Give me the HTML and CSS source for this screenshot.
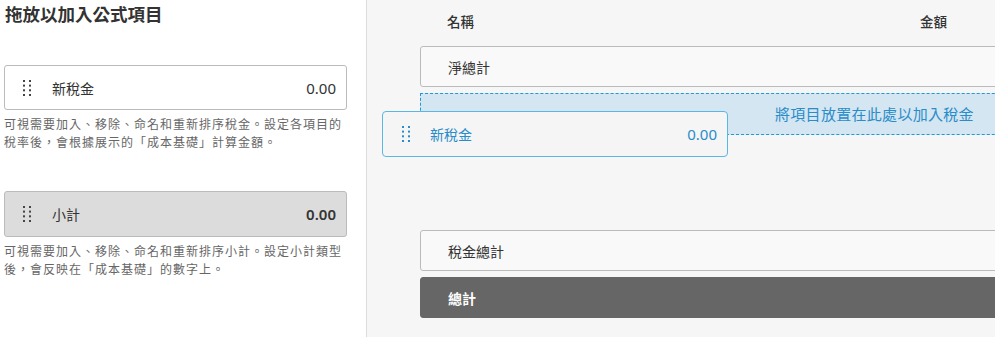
FILE: index.html
```html
<!DOCTYPE html>
<html lang="zh-Hant">
<head>
    <meta charset="UTF-8">
    <meta name="viewport" content="width=device-width, initial-scale=1.0">
    <title>公式項目</title>
    <link rel="stylesheet" href="styles.css">
</head>
<body>
    <div class="layout">
        <aside class="palette">
            <h2>拖放以加入公式項目</h2>

            <div class="item">
                <svg class="handle" width="8" height="16" viewBox="0 0 8 16"><g fill="currentColor"><rect x="0" y="0" width="2" height="2"/><rect x="6" y="0" width="2" height="2"/><rect x="0" y="4.6" width="2" height="2"/><rect x="6" y="4.6" width="2" height="2"/><rect x="0" y="9.3" width="2" height="2"/><rect x="6" y="9.3" width="2" height="2"/><rect x="0" y="14" width="2" height="2"/><rect x="6" y="14" width="2" height="2"/></g></svg>
                <span class="name">新稅金</span>
                <span class="amount">0.00</span>
            </div>
            <p class="hint">可視需要加入、移除、命名和重新排序稅金。設定各項目的稅率後，會根據展示的「成本基礎」計算金額。</p>

            <div class="item subtotal">
                <svg class="handle" width="8" height="16" viewBox="0 0 8 16"><g fill="currentColor"><rect x="0" y="0" width="2" height="2"/><rect x="6" y="0" width="2" height="2"/><rect x="0" y="4.6" width="2" height="2"/><rect x="6" y="4.6" width="2" height="2"/><rect x="0" y="9.3" width="2" height="2"/><rect x="6" y="9.3" width="2" height="2"/><rect x="0" y="14" width="2" height="2"/><rect x="6" y="14" width="2" height="2"/></g></svg>
                <span class="name">小計</span>
                <span class="amount">0.00</span>
            </div>
            <p class="hint">可視需要加入、移除、命名和重新排序小計。設定小計類型後，會反映在「成本基礎」的數字上。</p>
        </aside>

        <main class="formula">
            <div class="formula-head">
                <span>名稱</span>
                <span>金額</span>
            </div>
            <div class="row">淨總計</div>
            <div class="dropzone">將項目放置在此處以加入稅金</div>
            <div class="spacer"></div>
            <div class="row">稅金總計</div>
            <div class="row total">總計</div>

            <div class="item dragging">
                <svg class="handle" width="8" height="16" viewBox="0 0 8 16"><g fill="currentColor"><rect x="0" y="0" width="2" height="2"/><rect x="6" y="0" width="2" height="2"/><rect x="0" y="4.6" width="2" height="2"/><rect x="6" y="4.6" width="2" height="2"/><rect x="0" y="9.3" width="2" height="2"/><rect x="6" y="9.3" width="2" height="2"/><rect x="0" y="14" width="2" height="2"/><rect x="6" y="14" width="2" height="2"/></g></svg>
                <span class="name">新稅金</span>
                <span class="amount">0.00</span>
            </div>
        </main>
    </div>
</body>
</html>
```

FILE: styles.css
```css
body {
    margin: 0;
    font-family: "Noto Sans", "Noto Sans CJK TC", sans-serif;
    color: #333;
    overflow: hidden;
}
.layout {
    display: flex;
    height: 337px;
}
.palette {
    width: 367px;
    flex: none;
    box-sizing: border-box;
    padding: 0 19px 0 4px;
    background: #fff;
    border-right: 1px solid #ddd;
}
.palette h2 {
    margin: 0 0 37px 1px;
    font-size: 17.5px;
    font-weight: 600;
    line-height: 28px;
}
.item {
    display: flex;
    align-items: center;
    height: 45px;
    box-sizing: border-box;
    padding: 0 10px 0 18px;
    border: 1px solid #bbb;
    border-radius: 3px;
    background: #fff;
    font-size: 14px;
}
.item .handle {
    color: #444;
    margin-right: 21px;
}
.item .name {
    flex: 1;
}
.item .amount {
    font-size: 15px;
}
.item.subtotal {
    background: #dcdcdc;
    height: 46px;
}
.item.subtotal .amount {
    font-weight: 600;
}
.hint {
    margin: 6px 0 39px 0;
    font-size: 12px;
    letter-spacing: 1px;
    line-height: 18px;
    color: #666;
    text-spacing-trim: space-all;
}
.formula {
    flex: 1;
    position: relative;
    background: #f6f6f6;
    padding: 9px 0 0 53px;
}
.formula-head {
    display: grid;
    grid-template-columns: 473px auto;
    padding-left: 27px;
    height: 24px;
    align-items: center;
    font-size: 13.5px;
    font-weight: 500;
    margin-bottom: 13px;
}
.row {
    width: 640px;
    height: 41px;
    box-sizing: border-box;
    padding-left: 27px;
    display: flex;
    align-items: center;
    border: 1px solid #bbb;
    border-radius: 3px;
    background: #f9f9f9;
    font-size: 14px;
    margin-bottom: 6px;
}
.row.total {
    background: #666;
    border-color: #666;
    color: #fff;
    font-weight: 600;
}
.dropzone {
    width: 640px;
    height: 42px;
    box-sizing: border-box;
    padding: 0 0 2px 354px;
    display: flex;
    align-items: center;
    white-space: nowrap;
    border: 1px dashed #1e9ad6;
    background: #d3e6f1;
    color: #2a8cc9;
    font-size: 15px;
    letter-spacing: 0.3px;
}
.spacer {
    height: 95px;
}
.item.dragging {
    position: absolute;
    left: 15px;
    top: 111px;
    width: 346px;
    height: 46px;
    padding-left: 19px;
    background: #f5f5f5;
    border-color: #5ab6e3;
    border-width: 1.5px;
    border-radius: 4px;
    color: #2a8cc9;
}
.item.dragging .handle {
    color: #2a8cc9;
    margin-right: 20px;
}
```
